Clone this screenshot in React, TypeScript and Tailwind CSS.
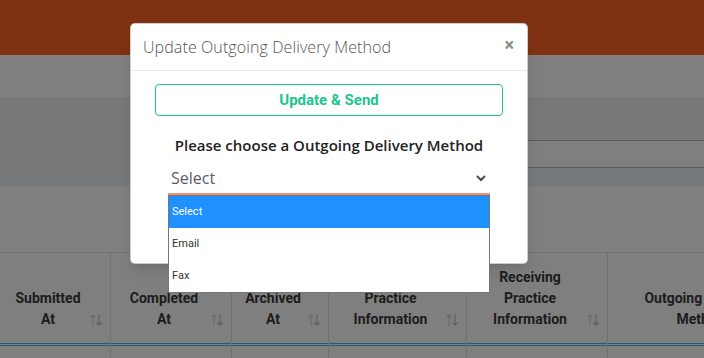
import { useState } from 'react'

type Column = {
  label: string[]
  width: string
  sortable?: boolean
}

const columns: Column[] = [
  { label: ['Submitted', 'At'], width: 'w-[111px]', sortable: true },
  { label: ['Completed', 'At'], width: 'w-[121px]', sortable: true },
  { label: ['Archived', 'At'], width: 'w-[97px]', sortable: true },
  { label: ['Practice', 'Information'], width: 'w-[138px]', sortable: true },
  { label: ['Receiving', 'Practice', 'Information'], width: 'w-[141px]', sortable: true },
  { label: ['Outgoing Delivery', 'Method'], width: 'w-[200px]', sortable: true },
]

const options = ['Select', 'Email', 'Fax']

function SortIcon() {
  return (
    <svg width="14" height="14" viewBox="0 0 14 14" fill="none" className="shrink-0">
      <path d="M4 13V2M1.5 4.5L4 2l2.5 2.5" stroke="#d4d4d4" strokeWidth="1.1" />
      <path d="M10 1v11M7.5 9.5L10 12l2.5-2.5" stroke="#bdbdbd" strokeWidth="1.1" />
    </svg>
  )
}

function Chevron() {
  return (
    <svg width="10" height="7" viewBox="0 0 10 7" fill="none">
      <path d="M1.5 1.5L5 5l3.5-3.5" stroke="#4b4b5c" strokeWidth="2" strokeLinecap="round" />
    </svg>
  )
}

export default function App() {
  const [selected, setSelected] = useState('Select')

  return (
    <div className="relative w-[704px] h-[358px] overflow-hidden bg-white font-['Roboto',sans-serif]">
      {/* page behind the modal */}
      <div className="h-[55px] bg-[#fe6424]" />
      <div className="h-[42px] bg-white" />
      <div className="h-[89px] bg-[#eff1f4] pt-[43px]">
        <div className="ml-[490px] w-[230px] h-[28px] bg-white border-y border-[#b5b5b5]" />
      </div>
      <div className="h-[66px] bg-white" />

      <div className="flex w-[808px] border-t border-[#dee2e6]">
        {columns.map((col, i) => (
          <div key={i} className={`${col.width} shrink-0 border-r border-[#dee2e6]`}>
            <div className="relative h-[90px] flex flex-col justify-end items-center pl-[10px] pr-[24px] pb-[13px] text-[14px] font-bold leading-[21px] text-[#3a3a3a] text-center">
              {col.label.map((line) => (
                <span key={line} className="whitespace-nowrap">{line}</span>
              ))}
              {col.sortable && (
                <span className="absolute right-[7px] bottom-[16px]">
                  <SortIcon />
                </span>
              )}
            </div>
            <div className="h-[3px] border-y border-[#38bdf8]" />
            <div className="h-[12px]" />
          </div>
        ))}
      </div>

      {/* backdrop */}
      <div className="absolute inset-0 bg-black/50" />

      {/* modal */}
      <div className="absolute left-[130px] top-[23px] w-[398px] h-[241px] bg-white rounded-[5px] border border-black/20 shadow-lg">
        <div className="flex items-center justify-between h-[47px] px-[12px] border-b border-[#e9ecef]">
          <h2 className="font-['Open_Sans',sans-serif] font-light text-[16px] text-[#555] tracking-[0.1px]">
            Update Outgoing Delivery Method
          </h2>
          <button type="button" className="text-[18px] font-bold text-[#8a8a8a] leading-none -mt-[4px] mr-[1px]">
            ×
          </button>
        </div>

        <div className="px-[24px] pt-[13px]">
          <button
            type="button"
            className="w-full h-[32px] rounded-[4px] border border-[#1ec592] text-[#1ec592] text-[15px] font-bold"
          >
            Update &amp; Send
          </button>

          <div className="mt-[18px] text-center font-['Open_Sans',sans-serif] font-semibold text-[15px] leading-[22px] text-[#222]">
            Please choose a Outgoing Delivery Method
          </div>

          <div className="relative mx-[13px] mt-[7px]">
            <div className="flex items-center justify-between h-[32px] pl-[3px] pr-[4px] border-b-2 border-[#f4907a]">
              <span className="font-['Open_Sans',sans-serif] text-[16px] text-[#5a5a66]">{selected}</span>
              <Chevron />
            </div>
            <ul className="absolute left-0 right-0 top-full bg-white border border-[#767676] font-['Roboto',sans-serif] text-[11px]">
              {options.map((opt) => (
                <li
                  key={opt}
                  onClick={() => setSelected(opt)}
                  className={
                    opt === 'Select'
                      ? 'h-[32px] flex items-center pl-[3px] bg-[#1e90ff] text-white'
                      : 'h-[32px] flex items-center pl-[3px] text-[#333]'
                  }
                >
                  {opt}
                </li>
              ))}
            </ul>
          </div>
        </div>
      </div>
    </div>
  )
}
